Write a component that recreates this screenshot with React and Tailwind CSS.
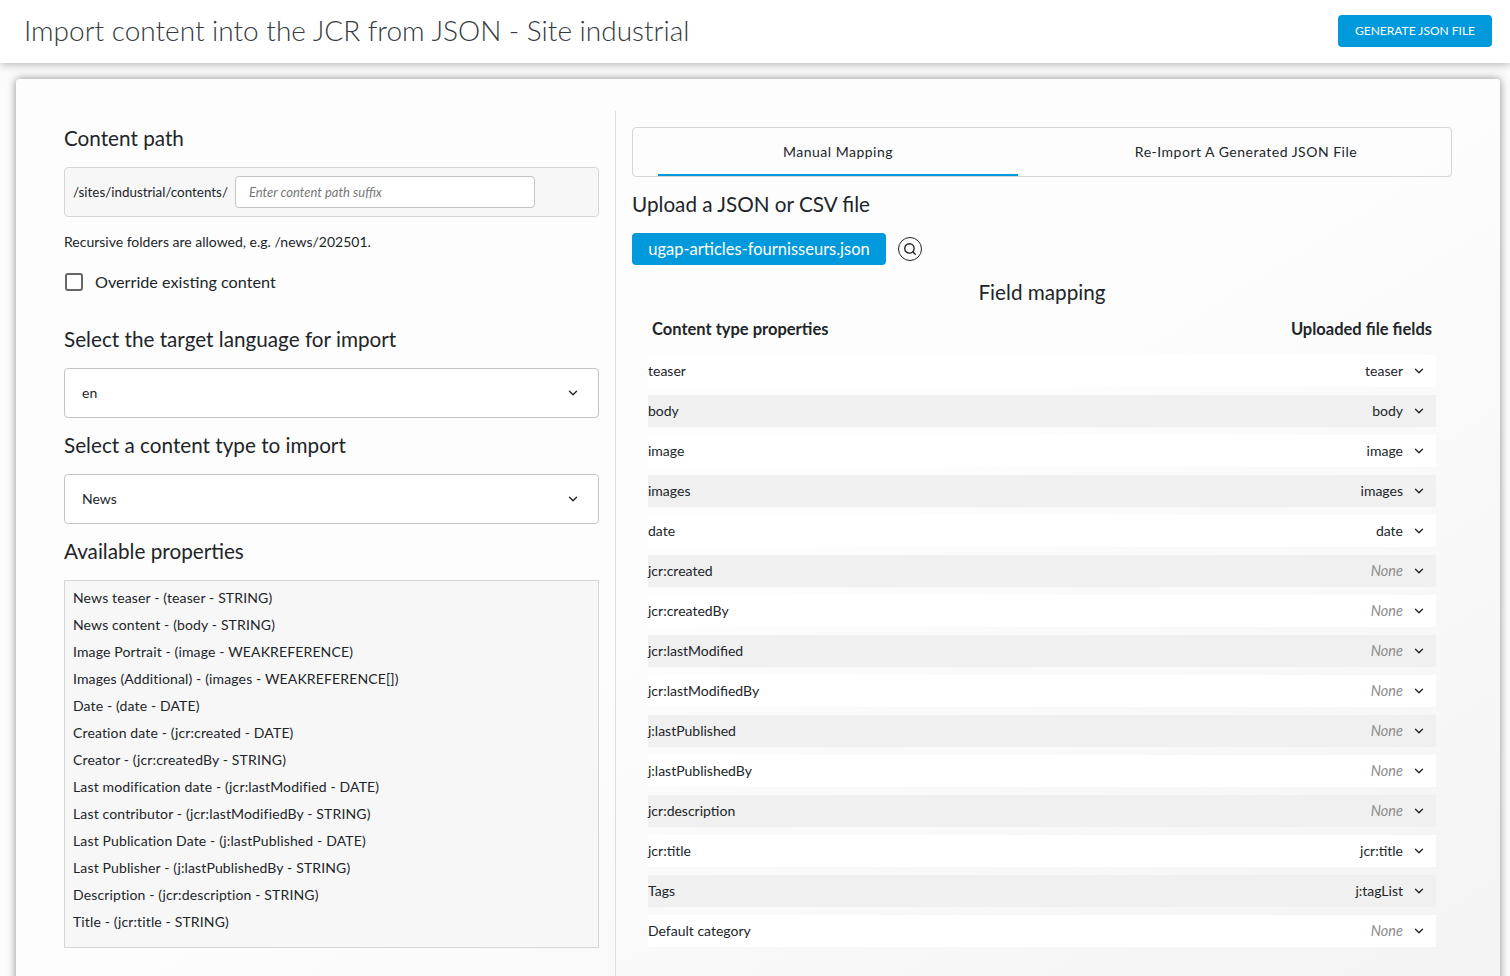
import { ChevronDown, Search } from 'lucide-react'

const PROPS = [
  'News teaser - (teaser - STRING)',
  'News content - (body - STRING)',
  'Image Portrait - (image - WEAKREFERENCE)',
  'Images (Additional) - (images - WEAKREFERENCE[])',
  'Date - (date - DATE)',
  'Creation date - (jcr:created - DATE)',
  'Creator - (jcr:createdBy - STRING)',
  'Last modification date - (jcr:lastModified - DATE)',
  'Last contributor - (jcr:lastModifiedBy - STRING)',
  'Last Publication Date - (j:lastPublished - DATE)',
  'Last Publisher - (j:lastPublishedBy - STRING)',
  'Description - (jcr:description - STRING)',
  'Title - (jcr:title - STRING)'
]

const ROWS = [
  ['teaser', 'teaser'],
  ['body', 'body'],
  ['image', 'image'],
  ['images', 'images'],
  ['date', 'date'],
  ['jcr:created', null],
  ['jcr:createdBy', null],
  ['jcr:lastModified', null],
  ['jcr:lastModifiedBy', null],
  ['j:lastPublished', null],
  ['j:lastPublishedBy', null],
  ['jcr:description', null],
  ['jcr:title', 'jcr:title'],
  ['Tags', 'j:tagList'],
  ['Default category', null]
]

function Select({ value }) {
  return (
    <div className="flex h-[50px] items-center justify-between rounded border border-[#c4c4c4] bg-white pl-[17px] pr-[18px] text-sm">
      <span>{value}</span>
      <ChevronDown size={14} strokeWidth={2.4} />
    </div>
  )
}

export default function App() {
  return (
    <div className="h-[976px] overflow-hidden bg-[#fbfbfb] font-['Lato','Liberation_Sans',sans-serif] text-[#212529]">
      <header className="relative flex h-[63px] items-center justify-between bg-white pl-6 pr-[18px] shadow-[0_2px_8px_rgba(0,0,0,0.25)]">
        <h1 className="pb-1 text-[28px] leading-8 font-light text-[#343a40]">
          Import content into the JCR from JSON - Site industrial
        </h1>
        <button className="mb-[1px] h-8 w-[154px] rounded bg-[#0099dc] text-xs text-white">GENERATE JSON FILE</button>
      </header>

      <main className="ml-4 mr-[10px] mt-4 flex h-[940px] rounded bg-linear-to-br from-[#fdfdfd] via-[#fdfdfd] to-[#f3f3f3] px-12 pt-8 shadow-[0_0_8px_rgba(0,0,0,0.45)]">
        <section className="w-[552px] shrink-0 border-r border-[#dedede] pr-4">
          <h2 className="mt-[15px] h-[25px] text-[20.7px] leading-6 font-normal">Content path</h2>
          <div className="mt-4 flex h-[50px] items-center rounded border border-[#d6d6d6] bg-[#f7f7f7] pl-2 text-[13.4px]">
            <span>/sites/industrial/contents/</span>
            <input
              readOnly
              placeholder="Enter content path suffix"
              className="ml-[7px] h-8 w-[300px] rounded-sm border border-[#c4c4c4] bg-white px-[13px] text-[13px] italic outline-none placeholder:text-[#777]"
            />
          </div>
          <p className="mt-4 text-[14px] leading-[18px]">Recursive folders are allowed, e.g. /news/202501.</p>
          <label className="mt-[21px] flex items-center text-[16.2px] leading-5">
            <span className="ml-[1px] h-[18px] w-[18px] rounded-[3px] border-2 border-[#666] bg-white" />
            <span className="ml-3">Override existing content</span>
          </label>

          <h2 className="mt-[35px] text-[20.7px] leading-6 font-normal">Select the target language for import</h2>
          <div className="mt-[17px]">
            <Select value="en" />
          </div>
          <h2 className="mt-[15px] text-[20.7px] leading-6 font-normal">Select a content type to import</h2>
          <div className="mt-[17px]">
            <Select value="News" />
          </div>
          <h2 className="mt-[15px] text-[20.7px] leading-6 font-normal">Available properties</h2>
          <ul className="mt-[17px] h-[368px] border border-[#d6d6d6] bg-[#f7f7f7] px-2 pt-[3px] text-sm tracking-[0.14px]">
            {PROPS.map(p => (
              <li key={p} className="h-[27px] leading-[27px]">{p}</li>
            ))}
          </ul>
        </section>

        <section className="min-w-0 flex-1 pl-4">
          <div className="mt-4 flex h-[50px] rounded-sm border border-[#d6d6d6] px-[25px] text-sm tracking-[0.5px]">
            <div className="flex w-[360px] items-center justify-center border-b-2 border-[#0099dc] pt-[2px]">Manual Mapping</div>
            <div className="flex flex-1 items-center justify-center pl-[48px]">Re-Import A Generated JSON File</div>
          </div>
          <h2 className="mt-[15px] text-[20.7px] leading-6 font-normal">Upload a JSON or CSV file</h2>
          <div className="mt-[17px] flex items-center">
            <div className="flex h-8 w-[254px] items-center justify-center rounded-sm bg-[#0099dc] text-[16.5px] text-white">
              ugap-articles-fournisseurs.json
            </div>
            <span className="ml-3 flex h-6 w-6 items-center justify-center rounded-full border border-[#222]">
              <Search size={14} strokeWidth={2.4} />
            </span>
          </div>
          <h2 className="mt-[15px] text-center text-[20.7px] leading-6 font-normal">Field mapping</h2>
          <div className="mt-[15px] flex justify-between px-5 text-[16.5px] leading-5 font-bold">
            <span>Content type properties</span>
            <span>Uploaded file fields</span>
          </div>
          <div className="mx-4 mt-4 flex flex-col gap-2">
            {ROWS.map(([name, field], i) => (
              <div
                key={name}
                className={`flex h-8 items-center justify-between text-sm ${i % 2 ? 'bg-[#f0f0f0]' : 'bg-white'}`}
              >
                <span>{name}</span>
                <span className="flex items-center pr-[10px]">
                  {field ? <span>{field}</span> : <span className="text-[14.5px] italic text-[#8c8c8c]">None</span>}
                  <ChevronDown size={14} strokeWidth={2.4} className="ml-[9px]" />
                </span>
              </div>
            ))}
          </div>
        </section>
      </main>
    </div>
  )
}
